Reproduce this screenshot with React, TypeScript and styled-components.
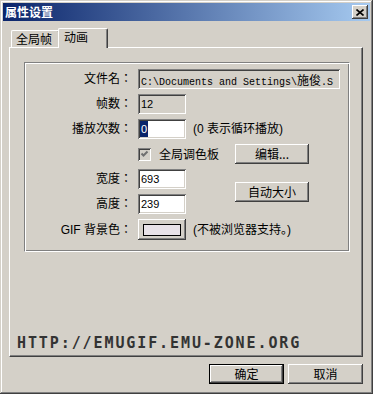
import React from 'react'
import styled, { createGlobalStyle, css } from 'styled-components'

const face = '#d4d0c8'
const cjk = '"Noto Sans CJK SC", "Liberation Sans", sans-serif'
const cjkLabel = '"Liberation Sans", "Noto Sans CJK JP", sans-serif'

const GlobalStyle = createGlobalStyle`
  html, body {
    margin: 0;
    padding: 0;
    background: ${face};
  }
  body {
    font-family: "Liberation Sans", "Noto Sans CJK SC", sans-serif;
    font-size: 12px;
    color: #000;
  }
`

const raised = css`
  box-shadow: inset -1px -1px #404040, inset 1px 1px #ffffff, inset -2px -2px #808080;
`

const sunken = css`
  box-shadow: inset 1px 1px #808080, inset -1px -1px #ffffff, inset 2px 2px #404040, inset -2px -2px ${face};
`

const Window = styled.div`
  box-sizing: border-box;
  width: 373px;
  height: 394px;
  padding: 3px;
  background: ${face};
  display: flex;
  flex-direction: column;
  box-shadow: inset -1px -1px #404040, inset 1px 1px ${face}, inset -2px -2px #808080, inset 2px 2px #ffffff;
`

const TitleBar = styled.div`
  height: 18px;
  flex: none;
  display: flex;
  align-items: center;
  justify-content: space-between;
  padding: 0 2px 0 2px;
  background: linear-gradient(to right, #0a246a, #a6caf0);
`

const Title = styled.div`
  color: #fff;
  font-family: ${cjk};
  font-weight: bold;
  font-size: 12px;
  line-height: 18px;
`

const CloseButton = styled.div`
  box-sizing: border-box;
  width: 16px;
  height: 14px;
  background: ${face};
  display: flex;
  align-items: center;
  justify-content: center;
  ${raised}
`

const Body = styled.div`
  flex: 1;
  display: flex;
  flex-direction: column;
  padding: 7px 7px 7px 6px;
`

const TabStrip = styled.div`
  height: 19px;
  display: flex;
  align-items: flex-end;
  padding-left: 2px;
  position: relative;
  z-index: 1;
`

const Tab = styled.div<{ $active?: boolean; $width: number }>`
  box-sizing: border-box;
  width: ${p => p.$width}px;
  height: ${p => (p.$active ? 20 : 17)}px;
  margin: ${p => (p.$active ? '0 0 -1px -2px' : '0')};
  padding: ${p => (p.$active ? '0 0 3px 5px' : '0 0 0 4px')};
  display: flex;
  align-items: center;
  background: ${face};
  border-top: 1px solid #fff;
  border-left: 1px solid #fff;
  border-right: 1px solid #404040;
  border-radius: 2px 2px 0 0;
  box-shadow: inset -1px 0 #808080;
  font-family: ${cjk};
  font-size: 12px;
  line-height: 1;
  position: relative;
  z-index: ${p => (p.$active ? 2 : 1)};
`

const TabPanel = styled.div`
  box-sizing: border-box;
  height: 310px;
  flex: none;
  display: flex;
  flex-direction: column;
  padding: 14px 0 0 14px;
  border-top: 1px solid #fff;
  border-left: 1px solid #fff;
  border-right: 1px solid #404040;
  border-bottom: 1px solid #404040;
  box-shadow: inset -1px -1px #808080;
`

const GroupBox = styled.div`
  box-sizing: border-box;
  width: 326px;
  height: 190px;
  padding-top: 6px;
  border: 1px solid;
  border-color: #808080 #fff #fff #808080;
  box-shadow: inset 1px 1px #fff, inset -1px -1px #808080;
`

const Form = styled.div`
  display: grid;
  grid-template-columns: 107px 6px 48px 49px 74px 1fr;
  grid-template-rows: repeat(6, 20px) 21px;
  row-gap: 5px;
`

const Label = styled.div<{ $row: number }>`
  grid-column: 1;
  grid-row: ${p => p.$row};
  align-self: center;
  text-align: right;
  font-family: ${cjkLabel};
  font-size: 12px;
  line-height: 1;
  white-space: nowrap;
`

const Field = styled.div<{ $readOnly?: boolean; $width: number; $row: number; $span?: string }>`
  box-sizing: border-box;
  grid-column: ${p => p.$span || '3'};
  grid-row: ${p => p.$row};
  width: ${p => p.$width}px;
  height: 20px;
  padding-left: 3px;
  display: flex;
  align-items: center;
  overflow: hidden;
  white-space: nowrap;
  background: ${p => (p.$readOnly ? face : '#fff')};
  font-family: "Liberation Sans", sans-serif;
  font-size: 11px;
  ${sunken}
`

const Mono = styled.span`
  font-family: "Liberation Mono", monospace;
  font-size: 10px;
`

const Wide = styled.span`
  font-family: ${cjk};
  font-size: 12px;
`

const Selected = styled.span`
  display: inline-block;
  height: 16px;
  line-height: 16px;
  padding: 0 1px;
  margin-left: -1px;
  background: #0a246a;
  color: #fff;
`

const Note = styled.div<{ $row: number }>`
  grid-column: 4 / 7;
  grid-row: ${p => p.$row};
  align-self: center;
  padding-left: 7px;
  font-family: "Liberation Sans", "Noto Sans CJK SC", sans-serif;
  font-size: 12px;
  line-height: 1;
  white-space: nowrap;
`

const CheckRow = styled.label`
  grid-column: 3 / 5;
  grid-row: 4;
  align-self: center;
  display: flex;
  align-items: center;
  gap: 8px;
  font-family: ${cjk};
  font-size: 12px;
  line-height: 1;
`

const CheckBox = styled.span`
  box-sizing: border-box;
  width: 13px;
  height: 13px;
  display: block;
  background: ${face};
  ${sunken}
`

const Button = styled.div<{ $row: string }>`
  box-sizing: border-box;
  grid-column: 5;
  grid-row: ${p => p.$row};
  align-self: center;
  height: 20px;
  display: flex;
  align-items: center;
  justify-content: center;
  background: ${face};
  font-family: ${cjk};
  font-size: 12px;
  line-height: 1;
  ${raised}
`

const ColorButton = styled.div`
  box-sizing: border-box;
  grid-column: 3;
  grid-row: 7;
  height: 21px;
  display: flex;
  align-items: center;
  justify-content: center;
  background: ${face};
  ${raised}
`

const Swatch = styled.div<{ $color: string }>`
  box-sizing: border-box;
  width: 38px;
  height: 12px;
  border: 1px solid #000;
  background: ${p => p.$color};
`

const Url = styled.div`
  margin: auto 0 5px -7px;
  font-family: "DejaVu Sans Mono", monospace;
  font-weight: bold;
  font-size: 15px;
  line-height: 15px;
  letter-spacing: 1.9px;
  color: #333;
`

const ButtonRow = styled.div`
  display: flex;
  justify-content: flex-end;
  gap: 4px;
  margin-top: 7px;
`

const PushButton = styled.div<{ $default?: boolean }>`
  box-sizing: border-box;
  width: 75px;
  height: 20px;
  display: flex;
  align-items: center;
  justify-content: center;
  background: ${face};
  font-family: ${cjk};
  font-size: 12px;
  line-height: 1;
  ${p =>
    p.$default
      ? css`
          border: 1px solid #000;
          ${raised}
        `
      : raised}
`

export default function App() {
  return (
    <>
      <GlobalStyle />
      <Window>
        <TitleBar>
          <Title>属性设置</Title>
          <CloseButton>
            <svg width="8" height="7" viewBox="0 0 8 7">
              <path d="M0.5 0.5 L7.5 6.5 M7.5 0.5 L0.5 6.5" stroke="#000" strokeWidth="1.6" fill="none" />
            </svg>
          </CloseButton>
        </TitleBar>
        <Body>
          <TabStrip>
            <Tab $width={49}>全局帧</Tab>
            <Tab $width={50} $active>动画</Tab>
          </TabStrip>
          <TabPanel>
            <GroupBox>
              <Form>
                <Label $row={1}>文件名：</Label>
                <Field $row={1} $width={202} $span="3 / 7" $readOnly>
                  <Mono>
                    C:\Documents and Settings\<Wide>施俊</Wide>.S
                  </Mono>
                </Field>

                <Label $row={2}>帧数：</Label>
                <Field $row={2} $width={48} $readOnly>12</Field>

                <Label $row={3}>播放次数：</Label>
                <Field $row={3} $width={48}>
                  <Selected>0</Selected>
                </Field>
                <Note $row={3}>(0 表示循环播放)</Note>

                <CheckRow>
                  <CheckBox>
                    <svg width="13" height="13" viewBox="0 0 13 13">
                      <polyline points="3.5,5.5 5.5,7.5 9.5,3.5" stroke="#707070" strokeWidth="2" fill="none" />
                    </svg>
                  </CheckBox>
                  全局调色板
                </CheckRow>
                <Button $row="4">编辑...</Button>

                <Label $row={5}>宽度：</Label>
                <Field $row={5} $width={48}>693</Field>
                <Button $row="5 / 7">自动大小</Button>

                <Label $row={6}>高度：</Label>
                <Field $row={6} $width={48}>239</Field>

                <Label $row={7}>GIF 背景色：</Label>
                <ColorButton>
                  <Swatch $color="#e8e2e8" />
                </ColorButton>
                <Note $row={7}>(不被浏览器支持。)</Note>
              </Form>
            </GroupBox>
            <Url>HTTP://EMUGIF.EMU-ZONE.ORG</Url>
          </TabPanel>
          <ButtonRow>
            <PushButton $default>确定</PushButton>
            <PushButton>取消</PushButton>
          </ButtonRow>
        </Body>
      </Window>
    </>
  )
}
